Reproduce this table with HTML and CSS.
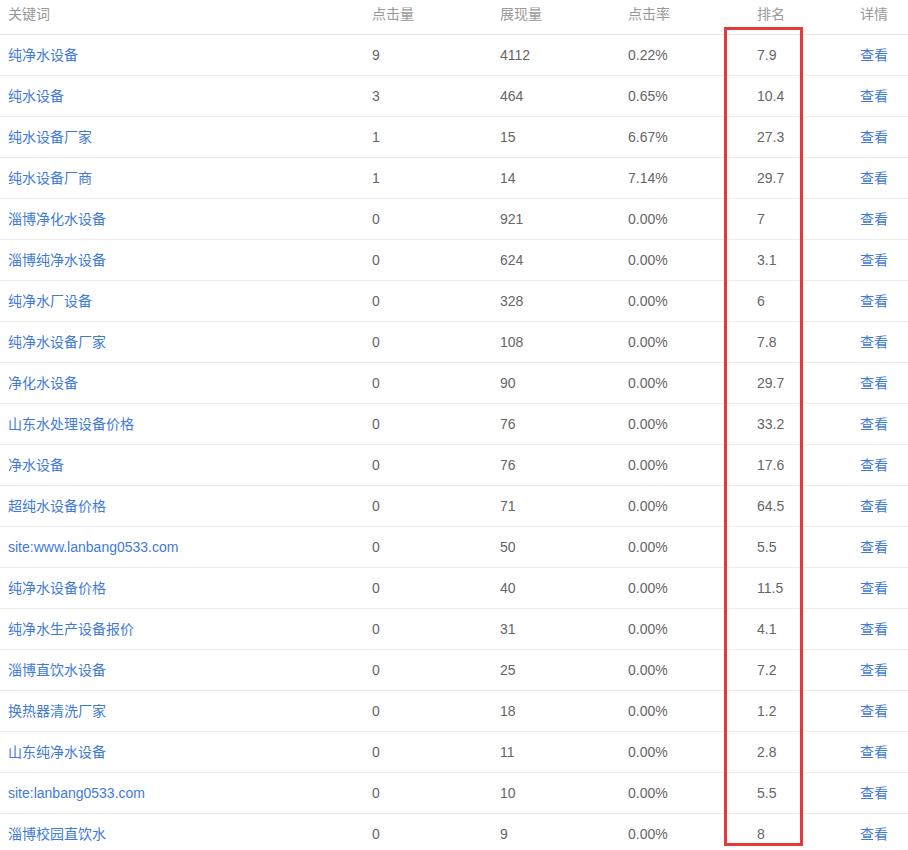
FILE: index.html
```html
<!DOCTYPE html>
<html lang="zh-CN">
<head>
<meta charset="utf-8">
<link rel="stylesheet" href="styles.css">
</head>
<body>
<div class="wrap">
  <div class="table">
    <div class="row head">
      <div class="c c1">关键词</div>
      <div class="c c2">点击量</div>
      <div class="c c3">展现量</div>
      <div class="c c4">点击率</div>
      <div class="c c5">排名</div>
      <div class="c c6">详情</div>
    </div>
    <div class="row"><div class="c c1 link">纯净水设备</div><div class="c c2">9</div><div class="c c3">4112</div><div class="c c4">0.22%</div><div class="c c5">7.9</div><div class="c c6 link">查看</div></div>
    <div class="row"><div class="c c1 link">纯水设备</div><div class="c c2">3</div><div class="c c3">464</div><div class="c c4">0.65%</div><div class="c c5">10.4</div><div class="c c6 link">查看</div></div>
    <div class="row"><div class="c c1 link">纯水设备厂家</div><div class="c c2">1</div><div class="c c3">15</div><div class="c c4">6.67%</div><div class="c c5">27.3</div><div class="c c6 link">查看</div></div>
    <div class="row"><div class="c c1 link">纯水设备厂商</div><div class="c c2">1</div><div class="c c3">14</div><div class="c c4">7.14%</div><div class="c c5">29.7</div><div class="c c6 link">查看</div></div>
    <div class="row"><div class="c c1 link">淄博净化水设备</div><div class="c c2">0</div><div class="c c3">921</div><div class="c c4">0.00%</div><div class="c c5">7</div><div class="c c6 link">查看</div></div>
    <div class="row"><div class="c c1 link">淄博纯净水设备</div><div class="c c2">0</div><div class="c c3">624</div><div class="c c4">0.00%</div><div class="c c5">3.1</div><div class="c c6 link">查看</div></div>
    <div class="row"><div class="c c1 link">纯净水厂设备</div><div class="c c2">0</div><div class="c c3">328</div><div class="c c4">0.00%</div><div class="c c5">6</div><div class="c c6 link">查看</div></div>
    <div class="row"><div class="c c1 link">纯净水设备厂家</div><div class="c c2">0</div><div class="c c3">108</div><div class="c c4">0.00%</div><div class="c c5">7.8</div><div class="c c6 link">查看</div></div>
    <div class="row"><div class="c c1 link">净化水设备</div><div class="c c2">0</div><div class="c c3">90</div><div class="c c4">0.00%</div><div class="c c5">29.7</div><div class="c c6 link">查看</div></div>
    <div class="row"><div class="c c1 link">山东水处理设备价格</div><div class="c c2">0</div><div class="c c3">76</div><div class="c c4">0.00%</div><div class="c c5">33.2</div><div class="c c6 link">查看</div></div>
    <div class="row"><div class="c c1 link">净水设备</div><div class="c c2">0</div><div class="c c3">76</div><div class="c c4">0.00%</div><div class="c c5">17.6</div><div class="c c6 link">查看</div></div>
    <div class="row"><div class="c c1 link">超纯水设备价格</div><div class="c c2">0</div><div class="c c3">71</div><div class="c c4">0.00%</div><div class="c c5">64.5</div><div class="c c6 link">查看</div></div>
    <div class="row"><div class="c c1 link">site:www.lanbang0533.com</div><div class="c c2">0</div><div class="c c3">50</div><div class="c c4">0.00%</div><div class="c c5">5.5</div><div class="c c6 link">查看</div></div>
    <div class="row"><div class="c c1 link">纯净水设备价格</div><div class="c c2">0</div><div class="c c3">40</div><div class="c c4">0.00%</div><div class="c c5">11.5</div><div class="c c6 link">查看</div></div>
    <div class="row"><div class="c c1 link">纯净水生产设备报价</div><div class="c c2">0</div><div class="c c3">31</div><div class="c c4">0.00%</div><div class="c c5">4.1</div><div class="c c6 link">查看</div></div>
    <div class="row"><div class="c c1 link">淄博直饮水设备</div><div class="c c2">0</div><div class="c c3">25</div><div class="c c4">0.00%</div><div class="c c5">7.2</div><div class="c c6 link">查看</div></div>
    <div class="row"><div class="c c1 link">换热器清洗厂家</div><div class="c c2">0</div><div class="c c3">18</div><div class="c c4">0.00%</div><div class="c c5">1.2</div><div class="c c6 link">查看</div></div>
    <div class="row"><div class="c c1 link">山东纯净水设备</div><div class="c c2">0</div><div class="c c3">11</div><div class="c c4">0.00%</div><div class="c c5">2.8</div><div class="c c6 link">查看</div></div>
    <div class="row"><div class="c c1 link">site:lanbang0533.com</div><div class="c c2">0</div><div class="c c3">10</div><div class="c c4">0.00%</div><div class="c c5">5.5</div><div class="c c6 link">查看</div></div>
    <div class="row"><div class="c c1 link">淄博校园直饮水</div><div class="c c2">0</div><div class="c c3">9</div><div class="c c4">0.00%</div><div class="c c5">8</div><div class="c c6 link">查看</div></div>
  </div>
  <div class="highlight"></div>
</div>
</body>
</html>
```
FILE: styles.css
```css
html, body {
  margin: 0;
  padding: 0;
  background: #fff;
}
body {
  font-family: "Liberation Sans", "Noto Sans CJK SC", sans-serif;
  font-size: 14px;
  color: #666;
}
.wrap {
  position: relative;
  width: 908px;
  height: 850px;
  overflow: hidden;
}
.table {
  display: flex;
  flex-direction: column;
}
.row {
  display: grid;
  grid-template-columns: 364px 128px 128px 129px 103px 56px;
  height: 40px;
  align-items: center;
  border-bottom: 1px solid #ebebeb;
  white-space: nowrap;
  line-height: 18px;
}
.row > .c {
  padding-bottom: 1px;
}
.row.head {
  height: 34px;
  align-items: start;
  line-height: 28px;
  color: #999;
  border-bottom: 1px solid #e8e8e8;
}
.row.head > .c {
  padding-bottom: 0;
}
.c {
  padding-left: 8px;
}
.link {
  color: #3f7ad8;
}
.highlight {
  position: absolute;
  left: 724px;
  top: 27px;
  width: 73px;
  height: 813px;
  border: 3px solid #e23a3a;
}
```
